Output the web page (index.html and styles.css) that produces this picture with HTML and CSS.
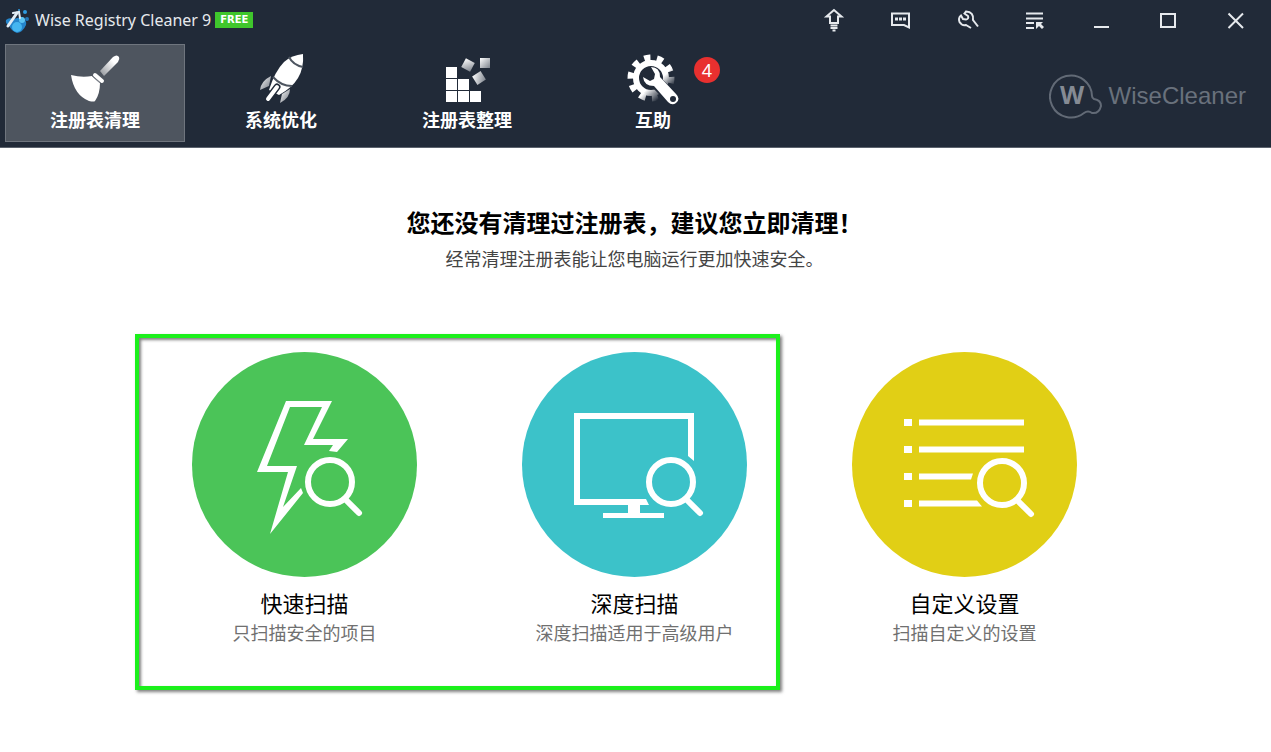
FILE: index.html
```html
<!DOCTYPE html>
<html lang="zh-CN">
<head>
    <meta charset="UTF-8">
    <title>Wise Registry Cleaner 9</title>
    <link rel="stylesheet" href="styles.css">
</head>
<body>
<header class="header">
    <div class="titlebar">
        <svg class="app-icon" width="24" height="26" viewBox="0 0 24 26">
            <path d="M1 13Q4 10 8 12L17 10Q22 13 21 18Q18 25 12 26Q6 24 4 18Q0 17 1 13Z" fill="#2585cb"/>
            <circle cx="12" cy="20" r="5" fill="#45b6f0"/>
            <circle cx="17" cy="13" r="3" fill="#5cc4f2"/>
            <circle cx="22" cy="12" r="2" fill="#2377b8"/>
            <circle cx="20" cy="5" r="2" fill="#2e9be0"/>
            <circle cx="14" cy="3" r="1" fill="#2e9be0"/>
            <path d="M3 19L12 6" fill="none" stroke="#e3edf5" stroke-width="3" stroke-linecap="round"/>
            <path d="M8 6L14 5L15 11" fill="none" stroke="#e3edf5" stroke-width="2" stroke-linecap="round"/>
        </svg>
        <span class="app-name">Wise Registry Cleaner 9</span>
        <span class="free">FREE</span>
        <div class="win-btns">
            <button type="button" aria-label="升级">
                <svg width="24" height="24" viewBox="0 0 24 24"><path d="M12 2L4.500 8.500H8V15H16V8.500H19.500Z"/><path d="M8.500 17.500H15.500M8.500 20H15.500M10.500 22.500H13.500"/></svg>
            </button>
            <button type="button" aria-label="反馈">
                <svg width="24" height="24" viewBox="0 0 24 24"><path d="M3 5.500H20V19.500L15 17H3Z"/><path d="M6 11H9M10 11H13M14 11H17" stroke-width="3"/></svg>
            </button>
            <button type="button" aria-label="设置">
                <svg width="24" height="24" viewBox="0 0 24 24"><path d="M22 18.500L17 12Q18 4 10 3.500L8.500 5.500L12 8Q13 11 10 11.500L7 11L5 7.500Q2 10 3.500 14Q6 18 10 17L15 20"/></svg>
            </button>
            <button type="button" aria-label="菜单">
                <svg width="24" height="24" viewBox="0 0 24 24"><path d="M3 5.500H20M3 10.500H20M3 15H11M3 20H11"/><path d="M13 21V14H20L18 16L21 19L19 21L16 18Z" fill="#e6e9ed" stroke="none"/></svg>
            </button>
            <button type="button" aria-label="最小化">
                <svg width="24" height="24" viewBox="0 0 24 24"><path d="M4 19H19"/></svg>
            </button>
            <button type="button" aria-label="最大化">
                <svg width="24" height="24" viewBox="0 0 24 24"><path d="M4 6H18V19H4Z"/></svg>
            </button>
            <button type="button" aria-label="关闭">
                <svg width="24" height="24" viewBox="0 0 24 24"><path d="M4.500 5.500L19 20M19 5.500L4.500 20"/></svg>
            </button>
        </div>
    </div>

    <div class="toolbar">
        <nav class="nav">
            <button type="button" class="active">
                <svg width="52" height="52" viewBox="0 0 52 52">
                    <defs>
                        <linearGradient id="handle" x1="1" y1="0" x2="0" y2="1">
                            <stop offset="0.300" stop-color="#fff"/>
                            <stop offset="1" stop-color="#8c9096"/>
                        </linearGradient>
                    </defs>
                    <path d="M44 4Q48 1 50 4Q51 6 49 9L35 23L31 18Z" fill="url(#handle)"/>
                    <path d="M26 22L33 28" stroke="#fff" stroke-width="4" stroke-linecap="round"/>
                    <path d="M2 22Q13 25 23 23L31 30Q31 41 26 48Q25 49 20 48Q5 42 2 22Z" fill="#fff"/>
                    <path d="M23 23L31 30" stroke="#7d828a" stroke-width="1"/>
                </svg>
                <span>注册表清理</span>
            </button>
            <button type="button">
                <svg width="52" height="52" viewBox="0 0 52 52">
                    <defs>
                        <linearGradient id="fin" x1="0" y1="0" x2="1" y2="1">
                            <stop offset="0" stop-color="#fff"/>
                            <stop offset="1" stop-color="#6e747e"/>
                        </linearGradient>
                    </defs>
                    <path d="M16 23Q6 28 5 37L14 33Z" fill="url(#fin)"/>
                    <path d="M35 36Q35 45 25 50L27 41Z" fill="url(#fin)"/>
                    <path d="M48 1Q37 2 29 9Q20 18 14 37L20 40L24 42Q37 35 43 25Q49 15 48 1Z" fill="#fff"/>
                    <path d="M34 4Q38 12 48 14M18 24Q26 33 37 33" fill="none" stroke="#4d5560" stroke-width="2"/>
                    <path d="M13 46L22 34" stroke="#212a38" stroke-width="7" stroke-linecap="round"/>
                    <path d="M13 46L22 34" stroke="#fff" stroke-width="4" stroke-linecap="round"/>
                </svg>
                <span>系统优化</span>
            </button>
            <button type="button">
                <svg width="52" height="52" viewBox="0 0 52 52">
                    <defs>
                        <linearGradient id="cube" x1="0" y1="0" x2="1" y2="1">
                            <stop offset="0" stop-color="#fff"/>
                            <stop offset="1" stop-color="#7d838c"/>
                        </linearGradient>
                    </defs>
                    <path d="M5 14h11v11H5zM5 26h11v11H5zM17 26h11v11H17zM5 38h11v11H5zM17 38h11v11H17zM29 38h11v11H29z" fill="#fff"/>
                    <rect x="22" y="7" width="10" height="10" transform="rotate(28 27 12)" fill="url(#cube)"/>
                    <rect x="39" y="5" width="10" height="10" fill="url(#cube)"/>
                    <rect x="33" y="20" width="10" height="10" transform="rotate(-32 38 25)" fill="url(#cube)"/>
                </svg>
                <span>注册表整理</span>
            </button>
            <button type="button">
                <svg width="52" height="52" viewBox="0 0 52 52">
                    <defs>
                        <linearGradient id="gear" gradientUnits="userSpaceOnUse" x1="28" y1="22" x2="41" y2="38">
                            <stop offset="0.300" stop-color="#fff"/>
                            <stop offset="1" stop-color="#212a38"/>
                        </linearGradient>
                    </defs>
                    <g fill="none" stroke="url(#gear)">
                        <circle cx="24" cy="25" r="15" stroke-width="6"/>
                        <circle cx="24" cy="25" r="20" stroke-width="7" stroke-dasharray="6.200 6.366" transform="rotate(-3 24 25)"/>
                    </g>
                    <path d="M27 27L46 46" stroke="#212a38" stroke-width="13" stroke-linecap="round"/>
                    <path d="M24 14Q33 14 33 24L49 41Q54 46 49 50Q45 53 41 49L27 33Q17 33 16 24L23 28L27 26L28 21Z" fill="#fff"/>
                    <circle cx="46" cy="46" r="3" fill="#212a38"/>
                </svg>
                <span>互助</span>
                <em class="badge">4</em>
            </button>
        </nav>
        <a class="brand" href="#">
            <svg width="54" height="48" viewBox="0 0 54 48">
                <path d="M43 24A21 21 0 1 0 35 41Q39 38 43 41Q50 42 52 34Q52 28 45 27Q43 26 43 24Z" fill="none" stroke="#626a76" stroke-width="2"/>
                <text x="23" y="32" text-anchor="middle">W</text>
            </svg>
            <span>WiseCleaner</span>
        </a>
    </div>
</header>

<main class="main">
    <h1>您还没有清理过注册表，建议您立即清理！</h1>
    <p class="tip">经常清理注册表能让您电脑运行更加快速安全。</p>

    <div class="scans">
        <button type="button" class="scan">
            <svg width="225" height="225" viewBox="0 0 225 225">
                <circle cx="112.500" cy="112.500" r="112.500" fill="#4bc458"/>
                <path d="M94 49H140L121 87H156L145 100L137 99L141 93H112L130 55H98L75 114H105L91 155L109 136L111 141L78 182L96 120H65Z" fill="#fff"/>
                <g fill="none" stroke="#fff" stroke-width="6">
                    <circle cx="138" cy="130" r="22"/>
                    <path d="M153 147L167 161" stroke-linecap="round"/>
                </g>
            </svg>
            <strong>快速扫描</strong>
            <span>只扫描安全的项目</span>
        </button>
        <button type="button" class="scan">
            <svg width="225" height="225" viewBox="0 0 225 225">
                <circle cx="112.500" cy="112.500" r="112.500" fill="#3cc2c9"/>
                <path d="M52 61H172V109L166 104V67H58V147H124L127 153H118V161H142V166H81V161H106V153H52Z" fill="#fff"/>
                <g fill="none" stroke="#fff" stroke-width="6">
                    <circle cx="149" cy="130" r="22"/>
                    <path d="M164 147L178 161" stroke-linecap="round"/>
                </g>
            </svg>
            <strong>深度扫描</strong>
            <span>深度扫描适用于高级用户</span>
        </button>
        <button type="button" class="scan">
            <svg width="225" height="225" viewBox="0 0 225 225">
                <circle cx="112.500" cy="112.500" r="112.500" fill="#e1cf15"/>
                <path d="M52 67h8v7h-8zM52 94h8v7h-8zM52 121h8v7h-8zM52 148h8v7h-8z" fill="#fff"/>
                <path d="M67 67.500H172V73.500H67zM67 94.500H172V100.500H67zM67 121.500H121L119 127.500H67zM67 148.500H125L130 154.500H67z" fill="#fff"/>
                <g fill="none" stroke="#fff" stroke-width="6">
                    <circle cx="150" cy="131" r="22"/>
                    <path d="M165 148L179 162" stroke-linecap="round"/>
                </g>
            </svg>
            <strong>自定义设置</strong>
            <span>扫描自定义的设置</span>
        </button>
        <div class="mark"></div>
    </div>
</main>
</body>
</html>
```
FILE: styles.css
```css
* {
    margin: 0;
    padding: 0;
    box-sizing: border-box;
}

body {
    background: #fff;
    font-family: "Liberation Sans", "Noto Sans CJK SC", sans-serif;
    color: #000;
}

button {
    border: 0;
    background: none;
    font: inherit;
    color: inherit;
    cursor: pointer;
}

svg {
    display: block;
}

.header {
    background: #212a38;
    color: #fff;
    border-bottom: 1px solid #5c636e;
}

/* title bar */
.titlebar {
    display: flex;
    align-items: center;
    height: 44px;
    padding: 0 2px 4px 5px;
}

.app-name {
    margin: 0 4px 0 6px;
    font: 16px "Noto Sans", sans-serif;
    color: #e6e9ed;
}

.free {
    padding: 0 5px;
    background: #3fc62c;
    font: bold 10px/16px "DejaVu Sans", sans-serif;
}

.win-btns {
    display: flex;
    margin-left: auto;
}

.win-btns button {
    display: flex;
    justify-content: center;
    align-items: center;
    width: 67px;
    height: 40px;
}

.win-btns svg {
    fill: none;
    stroke: #e6e9ed;
    stroke-width: 2;
}

/* toolbar */
.toolbar {
    display: flex;
    justify-content: space-between;
    align-items: center;
    padding: 0 25px 5px 5px;
}

.nav {
    display: flex;
    gap: 6px;
}

.nav button {
    display: flex;
    flex-direction: column;
    align-items: center;
    position: relative;
    width: 180px;
    height: 98px;
    padding-top: 8px;
    border: 1px solid transparent;
    font-size: 18px;
    font-weight: bold;
    line-height: 32px;
}

.nav .active {
    background: #4e555f;
    border-color: #6f757e;
}

.badge {
    position: absolute;
    top: 12px;
    left: 130px;
    width: 26px;
    height: 26px;
    border-radius: 13px;
    background: #e8302f;
    font: 18px/26px "Noto Sans", sans-serif;
    text-align: center;
}

.brand {
    display: flex;
    align-items: center;
    gap: 6px;
    padding-top: 5px;
    font-size: 24px;
    color: #69717c;
    text-decoration: none;
}

.brand text {
    font: bold 25px "Open Sans", sans-serif;
    fill: #858b94;
}

/* content */
.main {
    padding: 58px 2px 60px 0;
    text-align: center;
}

h1 {
    font-size: 24px;
    line-height: 36px;
}

.tip {
    margin-bottom: 74px;
    font-size: 18px;
    line-height: 36px;
    color: #444;
}

.scans {
    display: flex;
    justify-content: center;
    position: relative;
    width: 990px;
    max-width: 100%;
    margin: 0 auto;
}

.scan {
    flex: 1;
    display: flex;
    flex-direction: column;
    align-items: center;
}

.scan strong {
    margin-top: 13px;
    font-size: 22px;
    font-weight: normal;
    line-height: 30px;
}

.scan span {
    font-size: 18px;
    line-height: 28px;
    color: #707070;
}

/* green frame over the first two scans */
.mark {
    position: absolute;
    top: -18px;
    left: -5px;
    width: 645px;
    height: 356px;
    border: 4px solid #1cf01c;
    box-shadow: 2px 2px 3px rgba(0, 0, 0, .5), inset 2px 2px 3px rgba(0, 0, 0, .5);
    pointer-events: none;
}
```
